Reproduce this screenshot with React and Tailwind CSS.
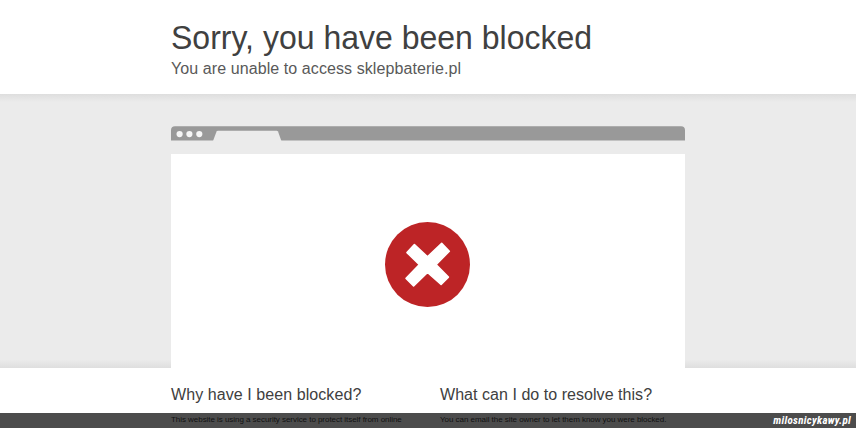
const columns = [
  {
    title: 'Why have I been blocked?',
    titleClass: 'tracking-[0.06px]',
    lines: [
      'This website is using a security service to protect itself from online',
      'attacks. The action you just performed triggered the security solution.',
    ],
  },
  {
    title: 'What can I do to resolve this?',
    titleClass: 'tracking-[0.03px]',
    lines: [
      'You can email the site owner to let them know you were blocked.',
      'Please include what you were doing when this page came up and the',
    ],
  },
];

function BrowserBar() {
  return (
    <svg className="block h-[15px] w-full" viewBox="0 0 514 15">
      <path d="M0 14.6V4Q0 0.2 4 0.2H510Q514 0.2 514 4V14.6Z" fill="#999999" />
      <path d="M42 15L45.6 5.6Q46 4.7 47 4.7H105.6Q106.6 4.7 107 5.6L110.4 15Z" fill="#ebebeb" />
      <circle cx="8.6" cy="8.1" r="3.1" fill="#f5f5f5" />
      <circle cx="18.4" cy="8.1" r="3.1" fill="#f5f5f5" />
      <circle cx="28.3" cy="8.1" r="3.1" fill="#f5f5f5" />
    </svg>
  );
}

function BlockedIcon() {
  return (
    <svg className="h-[86px] w-[86px]" viewBox="0 0 86 86">
      <circle cx="42.5" cy="42.6" r="42.5" fill="#bd2426" />
      <path
        d="M29.4 22.5L42.5 34.8L56.7 21.4L64.3 29.2L51 42.6L63.4 55.1L56.1 62.4L42.5 50.4L28.6 63.9L21.1 56.4L34.4 42.6L22 30.6Z"
        fill="#ffffff"
        stroke="#ffffff"
        strokeWidth="1.6"
        strokeLinejoin="round"
      />
    </svg>
  );
}

export default function App() {
  return (
    <div className="relative h-[428px] w-[856px] overflow-hidden bg-white font-['Liberation_Sans',sans-serif] text-[#404040]">
      {/* Header */}
      <header className="h-[94px] px-[171px] pt-[17px]">
        <h1 className="origin-left scale-x-[0.97] text-[33px] leading-[42px] whitespace-nowrap">
          Sorry, you have been blocked
        </h1>
        <h2 className="text-[16.05px] leading-[18px] tracking-[0.07px] whitespace-nowrap text-[#595959]">
          You are unable to access sklepbaterie.pl
        </h2>
      </header>

      {/* Browser window */}
      <section className="h-[274px] bg-[#ebebeb] bg-[linear-gradient(to_bottom,#dedede,#ebebeb_3%,#ebebeb_97%,#dedede)] px-[171px] pt-8">
        <BrowserBar />
        <div className="mt-[13px] flex h-[214px] justify-center bg-white pt-[68px]">
          <BlockedIcon />
        </div>
      </section>

      {/* Explanation */}
      <section className="flex gap-[24px] px-[171px] pt-[16px]">
        {columns.map((column) => (
          <div key={column.title} className="w-[245px]">
            <h2 className={`text-[16.05px] leading-[21px] whitespace-nowrap ${column.titleClass}`}>{column.title}</h2>
            <div className="mt-[9px] text-[8px] leading-[11px] tracking-[-0.045px] whitespace-nowrap">
              {column.lines.map((line) => (
                <p key={line}>{line}</p>
              ))}
            </div>
          </div>
        ))}
      </section>

      {/* Source label */}
      <div className="absolute inset-x-0 bottom-0 flex h-[15px] items-center justify-end bg-black/70 pr-[5px]">
        <span className="font-['Roboto_Condensed','Liberation_Sans_Narrow',Roboto,sans-serif] text-[11px] leading-[15px] font-bold tracking-[0.3px] text-white italic">
          milosnicykawy.pl
        </span>
      </div>
    </div>
  );
}
